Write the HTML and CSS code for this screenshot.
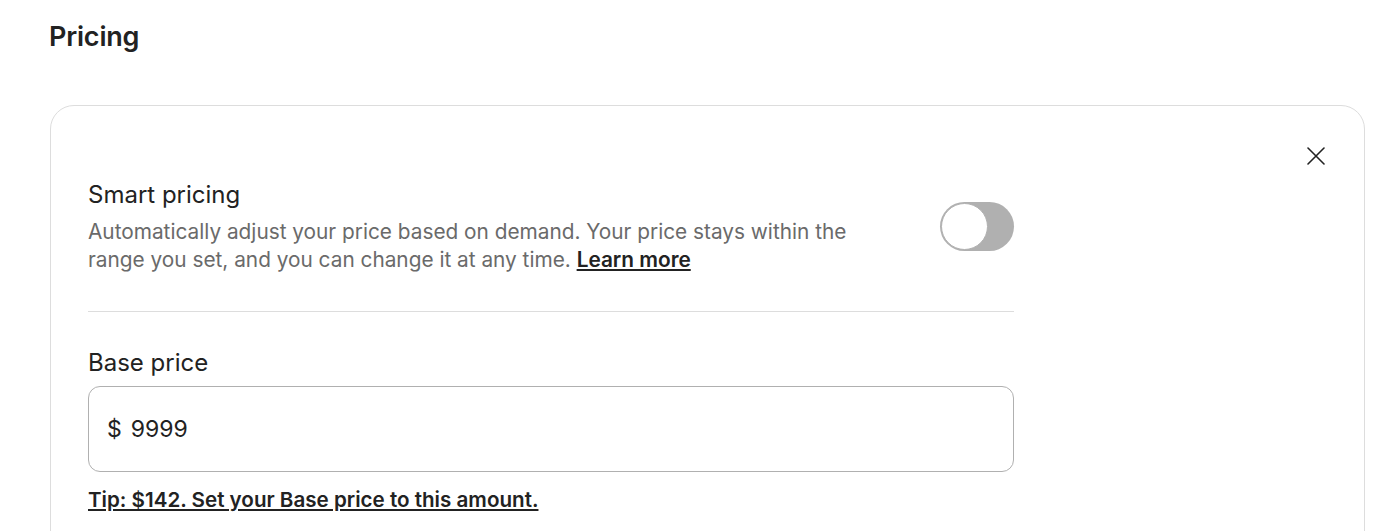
FILE: index.html
```html
<!DOCTYPE html>
<html>
<head>
<meta charset="utf-8">
<link rel="stylesheet" href="styles.css">
</head>
<body>
<div class="page">
  <h1 class="title">Pricing</h1>
  <div class="card">
    <div class="card-top">
      <button class="close" aria-label="Close">
        <svg width="18" height="18" viewBox="0 0 18 18"><path d="M1 1L17 17M17 1L1 17" stroke="#222" stroke-width="1.6" fill="none" stroke-linecap="round"/></svg>
      </button>
    </div>
    <div class="content">
      <div class="smart">
        <div class="smart-text">
          <div class="label">Smart pricing</div>
          <div class="desc">Automatically adjust your price based on demand. Your price stays within the range you set, and you can change it at any time. <a class="link" href="#">Learn more</a></div>
        </div>
        <div class="toggle"><div class="knob"></div></div>
      </div>
      <div class="divider"></div>
      <div class="label base-label">Base price</div>
      <div class="input"><span class="cur">$</span><span class="val">9999</span></div>
      <a class="tip" href="#">Tip: $142. Set your Base price to this amount.</a>
    </div>
  </div>
</div>
</body>
</html>
```

FILE: styles.css
```css
html, body {
  margin: 0;
  padding: 0;
  background: #fff;
}
body {
  font-family: Inter, "Noto Sans", sans-serif;
  color: #222;
}
.page {
  padding: 0 35px 0 49px;
}
.title {
  margin: 0;
  padding-top: 20px;
  font-size: 27px;
  font-weight: 600;
  line-height: 34px;
  letter-spacing: -0.2px;
}
.card {
  margin-top: 51px;
  margin-left: 1px;
  border: 1px solid #dddddd;
  border-radius: 24px;
  height: 500px;
  padding: 0 0 0 37px;
}
.card-top {
  display: flex;
  justify-content: flex-end;
  padding: 41px 39px 0 0;
  height: 18px;
}
.close {
  border: 0;
  background: none;
  padding: 0;
  width: 18px;
  height: 18px;
  display: flex;
}
.content {
  width: 926px;
  padding-top: 15px;
}
.smart {
  display: flex;
  justify-content: space-between;
  align-items: flex-start;
}
.smart-text {
  width: 790px;
}
.label {
  font-size: 24px;
  line-height: 30px;
}
.desc {
  font-size: 20.8px;
  line-height: 28px;
  color: #6a6a6a;
  margin-top: 8px;
}
.link {
  color: #222;
  font-weight: 600;
  text-decoration: underline;
}
.toggle {
  width: 74px;
  height: 49px;
  box-sizing: border-box;
  border-radius: 25px;
  background: #b0b0b0;
  margin-top: 22px;
  position: relative;
  flex-shrink: 0;
}
.knob {
  position: absolute;
  left: 1px;
  top: 1px;
  width: 47px;
  height: 47px;
  box-sizing: border-box;
  border-radius: 50%;
  background: #fff;
  border: 1px solid #b0b0b0;
}
.divider {
  height: 1px;
  background: #dddddd;
  margin-top: 37px;
}
.base-label {
  margin-top: 36px;
}
.input {
  margin-top: 8px;
  height: 86px;
  box-sizing: border-box;
  border: 1px solid #b0b0b0;
  border-radius: 12px;
  display: flex;
  align-items: center;
  padding-left: 18px;
  font-size: 23px;
}
.cur {
  margin-right: 9px;
}
.tip {
  display: inline-block;
  margin-top: 15px;
  font-size: 20.6px;
  line-height: 26px;
  font-weight: 600;
  color: #222;
  text-decoration: underline;
}
```
